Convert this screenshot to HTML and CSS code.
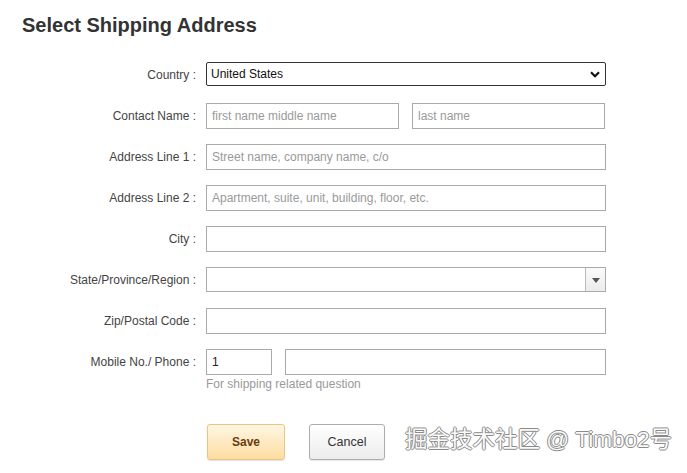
FILE: index.html
```html
<!DOCTYPE html>
<html>
<head>
<meta charset="utf-8">
<link rel="stylesheet" href="styles.css">
</head>
<body>
<div class="page">
  <h1 class="title">Select Shipping Address</h1>
  <form class="form">
    <div class="row">
      <label class="label">Country :</label>
      <div class="field">
        <div class="select-native">
          <span>United States</span>
          <svg class="chev" width="10" height="7" viewBox="0 0 10 7"><path d="M1 1.2 L5 5.2 L9 1.2" fill="none" stroke="#111" stroke-width="2.2"/></svg>
        </div>
      </div>
    </div>
    <div class="row">
      <label class="label">Contact Name :</label>
      <div class="field pair">
        <div class="input half ph">first name middle name</div>
        <div class="input half ph">last name</div>
      </div>
    </div>
    <div class="row">
      <label class="label">Address Line 1 :</label>
      <div class="field"><div class="input ph">Street name, company name, c/o</div></div>
    </div>
    <div class="row">
      <label class="label">Address Line 2 :</label>
      <div class="field"><div class="input ph">Apartment, suite, unit, building, floor, etc.</div></div>
    </div>
    <div class="row">
      <label class="label">City :</label>
      <div class="field"><div class="input"></div></div>
    </div>
    <div class="row">
      <label class="label">State/Province/Region :</label>
      <div class="field">
        <div class="combo">
          <div class="combo-text"></div>
          <div class="combo-btn"><span class="tri"></span></div>
        </div>
      </div>
    </div>
    <div class="row">
      <label class="label">Zip/Postal Code :</label>
      <div class="field"><div class="input"></div></div>
    </div>
    <div class="row phone-row">
      <label class="label">Mobile No./ Phone :</label>
      <div class="field">
        <div class="pair">
          <div class="input code">1</div>
          <div class="input num"></div>
        </div>
        <div class="hint">For shipping related question</div>
      </div>
    </div>
    <div class="actions">
      <button type="button" class="btn save">Save</button>
      <button type="button" class="btn cancel">Cancel</button>
    </div>
  </form>
  <div class="watermark">掘金技术社区 @ Timbo2号</div>
</div>
</body>
</html>
```
FILE: styles.css
```css
* { box-sizing: border-box; }
html, body { margin: 0; padding: 0; background: #fff; }
body {
  font-family: "Liberation Sans", Arial, sans-serif;
  color: #333;
  width: 687px;
  height: 473px;
  overflow: hidden;
}
.page { position: relative; width: 687px; height: 473px; }
.title {
  margin: 0;
  padding: 13px 0 0 22px;
  font-size: 20px;
  line-height: 24px;
  font-weight: bold;
  color: #333;
}
.form {
  display: flex;
  flex-direction: column;
  gap: 15px;
  margin-top: 25px;
}
.row {
  display: flex;
  align-items: flex-start;
  height: 26px;
}
.label {
  width: 206px;
  padding-right: 10px;
  text-align: right;
  font-size: 12px;
  line-height: 26px;
  color: #444;
}
.field { width: 400px; }
.pair { display: flex; gap: 13px; }
.input {
  height: 26px;
  border: 1px solid #aaa;
  background: #fff;
  font-size: 12px;
  line-height: 24px;
  padding: 0 5px;
  color: #222;
  white-space: nowrap;
  overflow: hidden;
}
.input.ph { color: #9a9a9a; }
.half { width: 193px; }
.code { width: 66px; }
.num { width: 321px; }
.select-native {
  height: 24px;
  border: 1px solid #333;
  border-radius: 2px;
  display: flex;
  align-items: center;
  justify-content: space-between;
  padding: 0 4px 0 4px;
  font-size: 12px;
  color: #111;
}
.chev { margin-right: 1px; }
.combo {
  height: 25px;
  border: 1px solid #aaa;
  display: flex;
}
.combo-text { flex: 1; }
.combo-btn {
  width: 20px;
  border-left: 1px solid #bbb;
  background: linear-gradient(#fafafa, #ececec);
  display: flex;
  align-items: center;
  justify-content: center;
}
.tri {
  width: 0; height: 0;
  border-left: 4px solid transparent;
  border-right: 4px solid transparent;
  border-top: 5px solid #555;
  margin-top: 1px;
}
.phone-row { height: auto; }
.hint {
  font-size: 12px;
  color: #999;
  line-height: 14px;
  margin-top: 2px;
}
.actions {
  display: flex;
  gap: 24px;
  padding-left: 207px;
  margin-top: 18px;
}
.btn {
  height: 36px;
  font-family: "Liberation Sans", Arial, sans-serif;
  font-size: 12px;
  border-radius: 3px;
  cursor: pointer;
}
.save {
  width: 78px;
  border: 1px solid #eac581;
  background: linear-gradient(#fff6e2, #fcdda1);
  color: #6a3d10;
  font-weight: bold;
  box-shadow: 0 1px 1px rgba(0,0,0,0.12);
}
.cancel {
  width: 76px;
  border: 1px solid #adadad;
  background: linear-gradient(#ffffff, #ececec);
  color: #333;
  font-size: 12.5px;
  box-shadow: 0 1px 1px rgba(0,0,0,0.1);
}
.watermark {
  position: absolute;
  right: 15px;
  top: 425px;
  font-family: "Liberation Sans", "Noto Sans CJK SC", sans-serif;
  font-size: 22.5px;
  line-height: 30px;
  color: #fafafa;
  text-shadow: -1px 0 #8a8a8a, 1px 0 #8a8a8a, 0 -1px #8a8a8a, 0 1px #8a8a8a;
}
```
